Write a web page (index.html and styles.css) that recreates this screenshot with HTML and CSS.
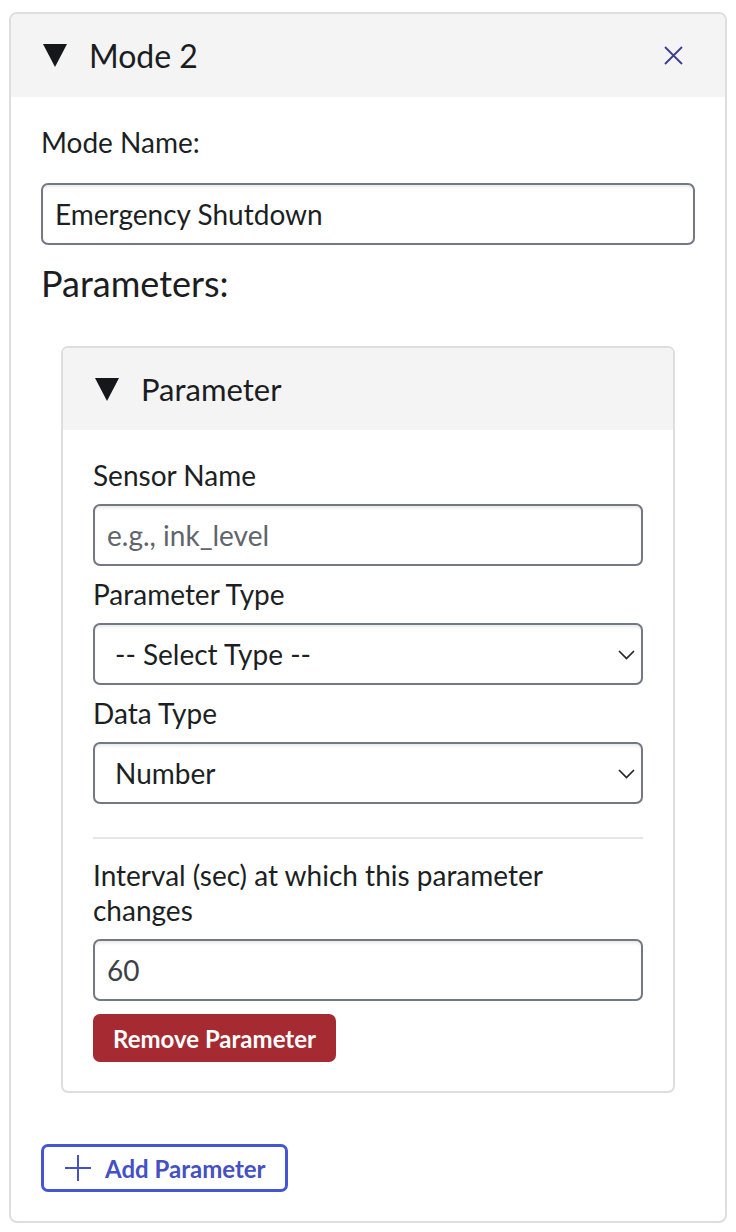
FILE: index.html
```html
<!DOCTYPE html>
<html lang="en">
<head>
<meta charset="utf-8">
<title>Mode 2</title>
<link rel="stylesheet" href="styles.css">
</head>
<body>
<section class="mode-card">
  <header class="mode-header">
    <svg class="caret" width="24" height="23" viewBox="0 0 24 23" aria-hidden="true"><polygon points="0,0 24,0 12,23" fill="#15171a"/></svg>
    <span class="mode-title">Mode 2</span>
    <button class="close-btn" type="button" aria-label="Remove mode">
      <svg width="19" height="19" viewBox="0 0 19 19"><path d="M1 1 L18 18 M18 1 L1 18" stroke="#3b3e8c" stroke-width="1.8" fill="none"/></svg>
    </button>
  </header>
  <div class="mode-body">
    <label class="field-label mode-label" for="modeName">Mode Name:</label>
    <input class="text-input" id="modeName" type="text" value="Emergency Shutdown">
    <h3 class="section-title">Parameters:</h3>

    <section class="param-card">
      <header class="param-header">
        <svg class="caret" width="24" height="23" viewBox="0 0 24 23" aria-hidden="true"><polygon points="0,0 24,0 12,23" fill="#15171a"/></svg>
        <span class="param-title">Parameter</span>
      </header>
      <div class="param-body">
        <label class="field-label" for="sensor">Sensor Name</label>
        <input class="text-input" id="sensor" type="text" placeholder="e.g., ink_level">

        <label class="field-label" for="ptype">Parameter Type</label>
        <div class="select-wrap">
          <select class="select-input" id="ptype">
            <option>-- Select Type --</option>
          </select>
          <svg class="chevron" width="17" height="10" viewBox="0 0 17 10" aria-hidden="true"><path d="M1 1 L8.5 8.5 L16 1" stroke="#23262b" stroke-width="1.7" fill="none"/></svg>
        </div>

        <label class="field-label" for="dtype">Data Type</label>
        <div class="select-wrap">
          <select class="select-input" id="dtype">
            <option>Number</option>
          </select>
          <svg class="chevron" width="17" height="10" viewBox="0 0 17 10" aria-hidden="true"><path d="M1 1 L8.5 8.5 L16 1" stroke="#23262b" stroke-width="1.7" fill="none"/></svg>
        </div>

        <hr class="divider">

        <label class="field-label" for="interval">Interval (sec) at which this parameter changes</label>
        <input class="text-input value-muted" id="interval" type="text" value="60">

        <button class="remove-btn" type="button">Remove Parameter</button>
      </div>
    </section>

    <button class="add-btn" type="button">
      <svg width="26" height="26" viewBox="0 0 26 26" aria-hidden="true"><path d="M13 0 V26 M0 13 H26" stroke="#4450c4" stroke-width="2" fill="none"/></svg>
      <span>Add Parameter</span>
    </button>
  </div>
</section>
</body>
</html>
```

FILE: styles.css
```css
* { box-sizing: border-box; }

body {
  margin: 0;
  padding: 12px 9px 0;
  background: #ffffff;
  font-family: Lato, "Open Sans", "Liberation Sans", sans-serif;
  color: #1c1f24;
}

.mode-card {
  border: 2px solid #dedede;
  border-radius: 8px;
  overflow: hidden;
  background: #fff;
}

.mode-header {
  height: 83px;
  background: #f4f4f4;
  display: flex;
  align-items: center;
  gap: 22px;
  padding: 0 42px 0 32px;
}

.caret { flex: none; display: block; }

.mode-title {
  font-size: 32px;
  line-height: 38px;
  color: #1b1d21;
}

.param-title {
  font-size: 31px;
  line-height: 37px;
  color: #1b1d21;
}

.close-btn {
  margin-left: auto;
  border: none;
  background: transparent;
  padding: 0;
  display: flex;
  cursor: pointer;
}

.mode-body {
  padding: 28px 30px 29px;
}

.field-label {
  display: block;
  font-size: 28px;
  line-height: 35px;
  margin-bottom: 11px;
  color: #1c1f24;
}

.mode-label { margin-bottom: 23px; }

.text-input,
.select-input {
  display: block;
  width: 100%;
  height: 62px;
  border: 2px solid #737883;
  border-radius: 7px;
  background: #fff;
  box-shadow: inset 0 3px 3px -1px rgba(0, 0, 0, 0.09);
  font-family: inherit;
  font-size: 28px;
  color: #1c1f24;
  padding: 0 12px;
  margin: 0 0 11px;
  outline: none;
}

.text-input::placeholder { color: #60656c; opacity: 1; }
.value-muted { color: #3c4148; }

.mode-body > .text-input { margin-bottom: 0; }

.select-wrap { position: relative; margin-bottom: 11px; }

.select-input {
  appearance: none;
  -webkit-appearance: none;
  padding: 0 40px 0 20px;
  margin: 0;
}

.chevron {
  position: absolute;
  right: 8px;
  top: 27px;
  pointer-events: none;
}

.section-title {
  font-size: 36px;
  line-height: 43px;
  font-weight: 400;
  margin: 17px 0 41px;
  color: #1b1d21;
}

.param-card {
  margin: 0 20px 51px;
  border: 2px solid #dedede;
  border-radius: 7px;
  overflow: hidden;
}

.param-header {
  height: 82px;
  background: #f4f4f4;
  display: flex;
  align-items: center;
  gap: 22px;
  padding: 0 32px;
}

.param-body {
  padding: 28px 30px 29px;
}

.divider {
  border: none;
  border-top: 2px solid #e6e6e6;
  margin: 33px 0 19px;
}

.remove-btn {
  display: block;
  margin-top: 13px;
  height: 48px;
  padding: 0 20px;
  border: none;
  border-radius: 7px;
  background: #a52a31;
  color: #fff;
  font-family: inherit;
  font-weight: 700;
  font-size: 24px;
}

.add-btn {
  display: inline-flex;
  align-items: center;
  gap: 14px;
  height: 48px;
  padding: 0 19px 0 21px;
  border: 3px solid #4655d6;
  border-radius: 7px;
  background: #fff;
  color: #4450c4;
  font-family: inherit;
  font-weight: 700;
  font-size: 24px;
}

.add-btn svg { display: block; flex: none; }
```
